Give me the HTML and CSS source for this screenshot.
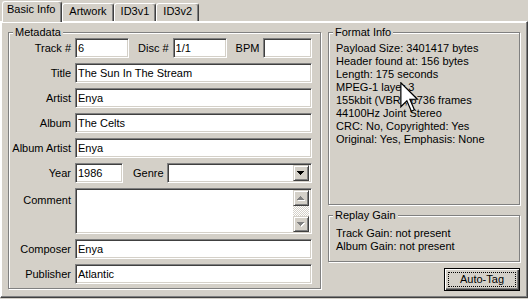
FILE: index.html
```html
<!DOCTYPE html>
<html>
	<head>
		<title>Tag Editor</title>
		<link rel="stylesheet" href="styles.css">
	</head>
	<body>
		<div class="tabs">
			<div class="tab active">Basic Info</div>
			<div class="tab">Artwork</div>
			<div class="tab">ID3v1</div>
			<div class="tab">ID3v2</div>
		</div>
		<div class="panel">
			<fieldset class="group meta">
				<legend>Metadata</legend>
				<div class="form">
					<label>Track #</label>
					<div class="line">
						<input class="field short" value="6">
						<label class="inline">Disc #</label>
						<input class="field short" value="1/1">
						<label class="inline">BPM</label>
						<input class="field grow" value="">
					</div>

					<label>Title</label>
					<input class="field" value="The Sun In The Stream">

					<label>Artist</label>
					<input class="field" value="Enya">

					<label>Album</label>
					<input class="field" value="The Celts">

					<label>Album Artist</label>
					<input class="field" value="Enya">

					<label>Year</label>
					<div class="line">
						<input class="field year" value="1986">
						<label class="inline genre">Genre</label>
						<div class="field select grow">
							<div class="grow"></div>
							<div class="btn">
								<svg width="14" height="14" viewBox="0 0 14 14"><path d="M3 5h7v1H3zM4 6h5v1H4zM5 7h3v1H5zM6 8h1v1H6z" fill="#000"/></svg>
							</div>
						</div>
					</div>

					<label class="top">Comment</label>
					<div class="field memo">
						<div class="grow"></div>
						<div class="scroll">
							<div class="btn">
								<svg width="14" height="14" viewBox="0 0 14 14"><path d="M7 6h1v1H7zM6 7h3v1H6zM5 8h5v1H5zM4 9h7v1H4z" fill="#fff"/><path d="M6 5h1v1H6zM5 6h3v1H5zM4 7h5v1H4zM3 8h7v1H3z" fill="#808080"/></svg>
							</div>
							<div class="track"></div>
							<div class="btn">
								<svg width="14" height="14" viewBox="0 0 14 14"><path d="M4 6h7v1H4zM5 7h5v1H5zM6 8h3v1H6zM7 9h1v1H7z" fill="#fff"/><path d="M3 5h7v1H3zM4 6h5v1H4zM5 7h3v1H5zM6 8h1v1H6z" fill="#808080"/></svg>
							</div>
						</div>
					</div>

					<label>Composer</label>
					<input class="field" value="Enya">

					<label>Publisher</label>
					<input class="field" value="Atlantic">
				</div>
			</fieldset>

			<div class="side">
				<fieldset class="group format">
					<legend>Format Info</legend>
					<div class="info">
						<div>Payload Size: 3401417 bytes</div>
						<div>Header found at: 156 bytes</div>
						<div>Length: 175 seconds</div>
						<div>MPEG-1 layer 3</div>
						<div>155kbit (VBR), 6736 frames</div>
						<div>44100Hz Joint Stereo</div>
						<div>CRC: No, Copyrighted: Yes</div>
						<div>Original: Yes, Emphasis: None</div>
					</div>
				</fieldset>
				<fieldset class="group gain">
					<legend>Replay Gain</legend>
					<div class="info">
						<div>Track Gain: not present</div>
						<div>Album Gain: not present</div>
					</div>
				</fieldset>
				<button class="autotag"><span>Auto-Tag</span></button>
			</div>
		</div>

		<svg class="cursor" width="19" height="30" viewBox="0 0 12.5 20"><path d="M0.5 0.5V16.5L4.5 12.5L7.5 19.5L9.5 18.5L6.5 11.5H11.5Z" fill="#fff" stroke="#000" stroke-width="0.8" stroke-linejoin="miter"/></svg>
	</body>
</html>
```

FILE: styles.css
```css
body {
	margin: 0;
	width: 528px;
	height: 299px;
	overflow: hidden;
	background-color: #d4d0c8;
	font-family: "Liberation Sans", Arial, sans-serif;
	font-size: 11px;
	color: #000;
}

/* tab strip */
.tabs {
	display: flex;
	align-items: flex-end;
	height: 21px;
	padding-left: 2px;
}
.tab {
	box-sizing: border-box;
	height: 18px;
	padding: 0 6px;
	line-height: 15px;
	border: 1px solid;
	border-bottom: none;
	border-color: #fff #404040 #fff #fff;
	border-radius: 3px 3px 0 0;
	box-shadow: inset -1px 0 #808080;
}
.tab.active {
	position: relative;
	z-index: 1;
	height: 21px;
	margin-bottom: -1px;
	padding: 0 6px 0 4px;
	background: #d4d0c8;
}

.panel {
	display: flex;
	gap: 7px;
	box-sizing: border-box;
	height: 277px;
	padding: 4px 7px 0 7px;
	border: 1px solid;
	border-color: #fff #404040 #404040 #fff;
	box-shadow: inset -1px -1px #808080, inset 1px 1px #fff;
}

/* etched group boxes */
.group {
	box-sizing: border-box;
	margin: 0;
	padding: 0;
	border: 1px solid #808080;
	box-shadow: inset 1px 1px #fff, 1px 1px #fff;
}
.group legend {
	margin-left: 4px;
	padding: 0 2px;
	line-height: 12px;
	background: #d4d0c8;
}

.meta {
	width: 313px;
	height: 263px;
}
.form {
	display: grid;
	grid-template-columns: 62px 237px;
	column-gap: 4px;
	row-gap: 5px;
}
.form label {
	text-align: right;
	line-height: 20px;
	white-space: nowrap;
}
.form label.top {
	padding-top: 2px;
}
.line {
	display: flex;
	align-items: center;
}
.line label.inline {
	margin: 0 4px 0 9px;
}
.line label.genre {
	margin: 0 3px 0 10px;
}
.grow {
	flex: 1;
}

/* sunken fields */
.field {
	box-sizing: border-box;
	height: 20px;
	margin: 0;
	padding: 0 2px;
	border: 1px solid;
	border-color: #808080 #fff #fff #808080;
	box-shadow: inset 1px 1px #404040, inset -1px -1px #d4d0c8;
	background: #fff;
	font: inherit;
	color: #000;
	outline: none;
	min-width: 0;
}
.field.short { width: 54px; }
.field.year { width: 48px; }

.select {
	display: flex;
	padding: 1px 2px 1px 1px;
}
.memo {
	display: flex;
	height: 46px;
	padding: 1px 2px 1px 1px;
}

/* raised buttons used by the select and scrollbar */
.btn {
	box-sizing: border-box;
	width: 16px;
	height: 16px;
	border: 1px solid;
	border-color: #d4d0c8 #404040 #404040 #d4d0c8;
	box-shadow: inset 1px 1px #fff, inset -1px -1px #808080;
	background: #d4d0c8;
}
.btn svg {
	display: block;
}
.scroll {
	display: flex;
	flex-direction: column;
	width: 16px;
}
.track {
	flex: 1;
	background: repeating-conic-gradient(#fff 0 25%, #d4d0c8 0 50%) 0 0 / 2px 2px;
}

/* right column */
.side {
	display: flex;
	flex-direction: column;
	width: 192px;
}
.format {
	height: 179px;
}
.format .info {
	padding: 4px 0 0 7px;
}
.gain {
	height: 53px;
	margin-top: 4px;
}
.gain .info {
	padding: 6px 0 0 7px;
}
.info div {
	line-height: 13px;
	white-space: nowrap;
}

.autotag {
	align-self: flex-end;
	box-sizing: border-box;
	width: 76px;
	height: 23px;
	margin: 6px 0 0 0;
	padding: 3px;
	border: 1px solid #000;
	box-shadow: inset 1px 1px #fff, inset -1px -1px #404040, inset -2px -2px #808080;
	background: #d4d0c8;
	font: inherit;
	color: #000;
}
.autotag span {
	display: block;
	height: 15px;
	line-height: 13px;
	border: 1px dotted #000;
	box-sizing: border-box;
}

.cursor {
	position: absolute;
	left: 400px;
	top: 82px;
}
```
